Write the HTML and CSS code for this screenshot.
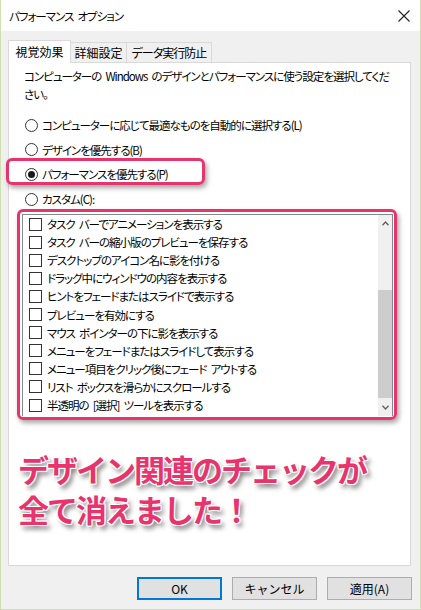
FILE: index.html
```html
<!DOCTYPE html>
<html lang="ja">
<head>
  <meta charset="UTF-8" />
  <title>パフォーマンス オプション</title>
  <link rel="stylesheet" href="styles.css">
</head>
<body>

<div class="window">
  <div class="titlebar">
    <span class="title">パフォーマンス オプション</span>
    <svg class="close" width="12" height="12" viewBox="0 0 12 12">
      <path d="M0.5 0.5 L11.5 11.5 M11.5 0.5 L0.5 11.5" stroke="#222" stroke-width="1.1" fill="none"/>
    </svg>
  </div>

  <div class="dialog">
    <div class="tabs">
      <div class="tab active">視覚効果</div>
      <div class="tab tab-2">詳細設定</div>
      <div class="tab tab-3">データ実行防止</div>
    </div>

    <div class="panel">
      <p class="desc">コンピューターの Windows のデザインとパフォーマンスに使う設定を選択してくだ<br>さい。</p>

      <div class="radios">
        <div class="radio"><span class="dot"></span>コンピューターに応じて最適なものを自動的に選択する(L)</div>
        <div class="radio"><span class="dot"></span>デザインを優先する(B)</div>
        <div class="radio checked"><span class="dot"></span>パフォーマンスを優先する(P)</div>
        <div class="radio"><span class="dot"></span>カスタム(C):</div>
      </div>

      <div class="mark-list">
        <div class="listbox">
          <ul class="items">
            <li><span class="check"></span>タスク バーでアニメーションを表示する</li>
            <li><span class="check"></span>タスク バーの縮小版のプレビューを保存する</li>
            <li><span class="check"></span>デスクトップのアイコン名に影を付ける</li>
            <li><span class="check"></span>ドラッグ中にウィンドウの内容を表示する</li>
            <li><span class="check"></span>ヒントをフェードまたはスライドで表示する</li>
            <li><span class="check"></span>プレビューを有効にする</li>
            <li><span class="check"></span>マウス ポインターの下に影を表示する</li>
            <li><span class="check"></span>メニューをフェードまたはスライドして表示する</li>
            <li><span class="check"></span>メニュー項目をクリック後にフェード アウトする</li>
            <li><span class="check"></span>リスト ボックスを滑らかにスクロールする</li>
            <li><span class="check"></span>半透明の [選択] ツールを表示する</li>
          </ul>
          <div class="scrollbar">
            <div class="sb-btn">
              <svg width="7" height="5" viewBox="0 0 7 5"><path d="M0.5 4.2 L3.5 1 L6.5 4.2" stroke="#606060" stroke-width="1.3" fill="none"/></svg>
            </div>
            <div class="sb-track"><div class="sb-thumb"></div></div>
            <div class="sb-btn">
              <svg width="7" height="5" viewBox="0 0 7 5"><path d="M0.5 0.8 L3.5 4 L6.5 0.8" stroke="#606060" stroke-width="1.3" fill="none"/></svg>
            </div>
          </div>
        </div>
      </div>

      <div class="note">
        <div class="note-line">デザイン関連のチェックが</div>
        <div class="note-line">全て消えました！</div>
      </div>
    </div>

    <div class="buttons">
      <button class="btn default">OK</button>
      <button class="btn">キャンセル</button>
      <button class="btn">適用(A)</button>
    </div>
  </div>

  <!-- pink marker around the selected radio -->
  <div class="mark-radio"></div>
</div>

</body>
</html>
```

FILE: styles.css
```css
* { box-sizing: border-box; }

body {
  margin: 0;
  font-family: "Noto Sans CJK JP", sans-serif;
  font-size: 12px;
  color: #000;
  background: #fff;
}

.window {
  position: relative;
  width: 421px;
  height: 610px;
  display: flex;
  flex-direction: column;
  border: 1px solid #cfdfae;
  border-top: none;
  background: #f0f0f0;
}

/* narrow kana, as Meiryo UI draws them */
.title, .desc, .radio, .items li, .tab-3 {
  font-size: 11.5px;
  letter-spacing: -1px;
  word-spacing: 2.5px;
  font-feature-settings: "palt";
}

.titlebar {
  height: 31px;
  background: #fff;
  display: flex;
  align-items: center;
  justify-content: space-between;
  padding: 1px 10px 0 8px;
}

.dialog {
  flex: 1;
  display: flex;
  flex-direction: column;
  padding: 9px 9px 0 7px;
}

.tabs {
  display: flex;
  align-items: flex-end;
  height: 22px;
}

.tab {
  height: 20px;
  border: 1px solid #d9d9d9;
  border-bottom: none;
  margin-left: -1px;
  background: #f0f0f0;
  text-align: center;
  line-height: 19px;
}

.tab.active {
  width: 63px;
  height: 23px;
  margin-left: 0;
  margin-bottom: -1px;
  background: #fff;
  position: relative;
  z-index: 1;
  line-height: 21px;
}

.tab-2 { width: 57px; }
.tab-3 { width: 86px; font-size: 12px; }

.panel {
  height: 504px;
  background: #fff;
  border: 1px solid #d9d9d9;
  padding: 4px 15px 0 15px;
}

.desc {
  margin: 0;
  line-height: 18px;
  white-space: nowrap;
}

.radios {
  display: flex;
  flex-direction: column;
  gap: 4.7px;
  margin-top: 12px;
}

.radio {
  height: 20px;
  display: flex;
  align-items: center;
  gap: 4px;
}

.dot {
  width: 13px;
  height: 13px;
  margin-left: 1px;
  border: 1px solid #333;
  border-radius: 50%;
  background: #fff;
  display: flex;
  align-items: center;
  justify-content: center;
}

.radio.checked .dot::after {
  content: "";
  width: 7px;
  height: 7px;
  border-radius: 50%;
  background: #1a1a1a;
}

.mark-list {
  margin: 0 0 0 -7px;
  width: 380px;
  height: 211px;
  padding: 2px 1px 1px 2px;
  border: 3px solid #e6346c;
  border-radius: 6px;
  box-shadow: 2px 3px 5px rgba(0, 0, 0, 0.35);
}

.listbox {
  height: 100%;
  display: flex;
  border: 1px solid #828790;
  border-bottom: none;
  background: #fff;
}

.items {
  flex: 1;
  list-style: none;
  margin: 0;
  padding: 0;
}

.items li {
  height: 18.1px;
  display: flex;
  align-items: center;
  gap: 5px;
  padding-left: 6px;
  white-space: pre;
}

.check {
  width: 13px;
  height: 13px;
  border: 1px solid #333;
  background: #fff;
  flex: none;
}

.scrollbar {
  width: 14px;
  display: flex;
  flex-direction: column;
  background: #f0f0f0;
}

.sb-btn {
  height: 17px;
  display: flex;
  align-items: center;
  justify-content: center;
}

.sb-track {
  flex: 1;
}

.sb-thumb {
  margin-top: 58px;
  height: 108px;
  background: #cdcdcd;
}

.note {
  margin: 29px 0 0 -6px;
  font-size: 31px;
  font-weight: 700;
  letter-spacing: -2px;
  color: #e8336d;
  text-shadow:
    1px 0 0 #fff, -1px 0 0 #fff, 0 1px 0 #fff, 0 -1px 0 #fff,
    1px 1px 0 #fff, -1px -1px 0 #fff, 1px -1px 0 #fff, -1px 1px 0 #fff,
    3px 4px 5px rgba(0, 0, 0, 0.55);
}

.note-line {
  height: 40px;
  line-height: 40px;
}

.buttons {
  display: flex;
  justify-content: flex-end;
  gap: 10px;
  padding-top: 11px;
  margin-right: -1px;
}

.btn {
  width: 85px;
  height: 23px;
  padding: 0;
  font-family: inherit;
  font-size: 12px;
  color: #000;
  background: #e1e1e1;
  border: 1px solid #adadad;
}

.btn.default {
  border: 2px solid #0078d7;
}

.mark-radio {
  position: absolute;
  left: 5px;
  top: 158px;
  width: 199px;
  height: 27px;
  border: 3px solid #e6346c;
  border-radius: 6px;
  box-shadow: 2px 3px 5px rgba(0, 0, 0, 0.35);
}
```
